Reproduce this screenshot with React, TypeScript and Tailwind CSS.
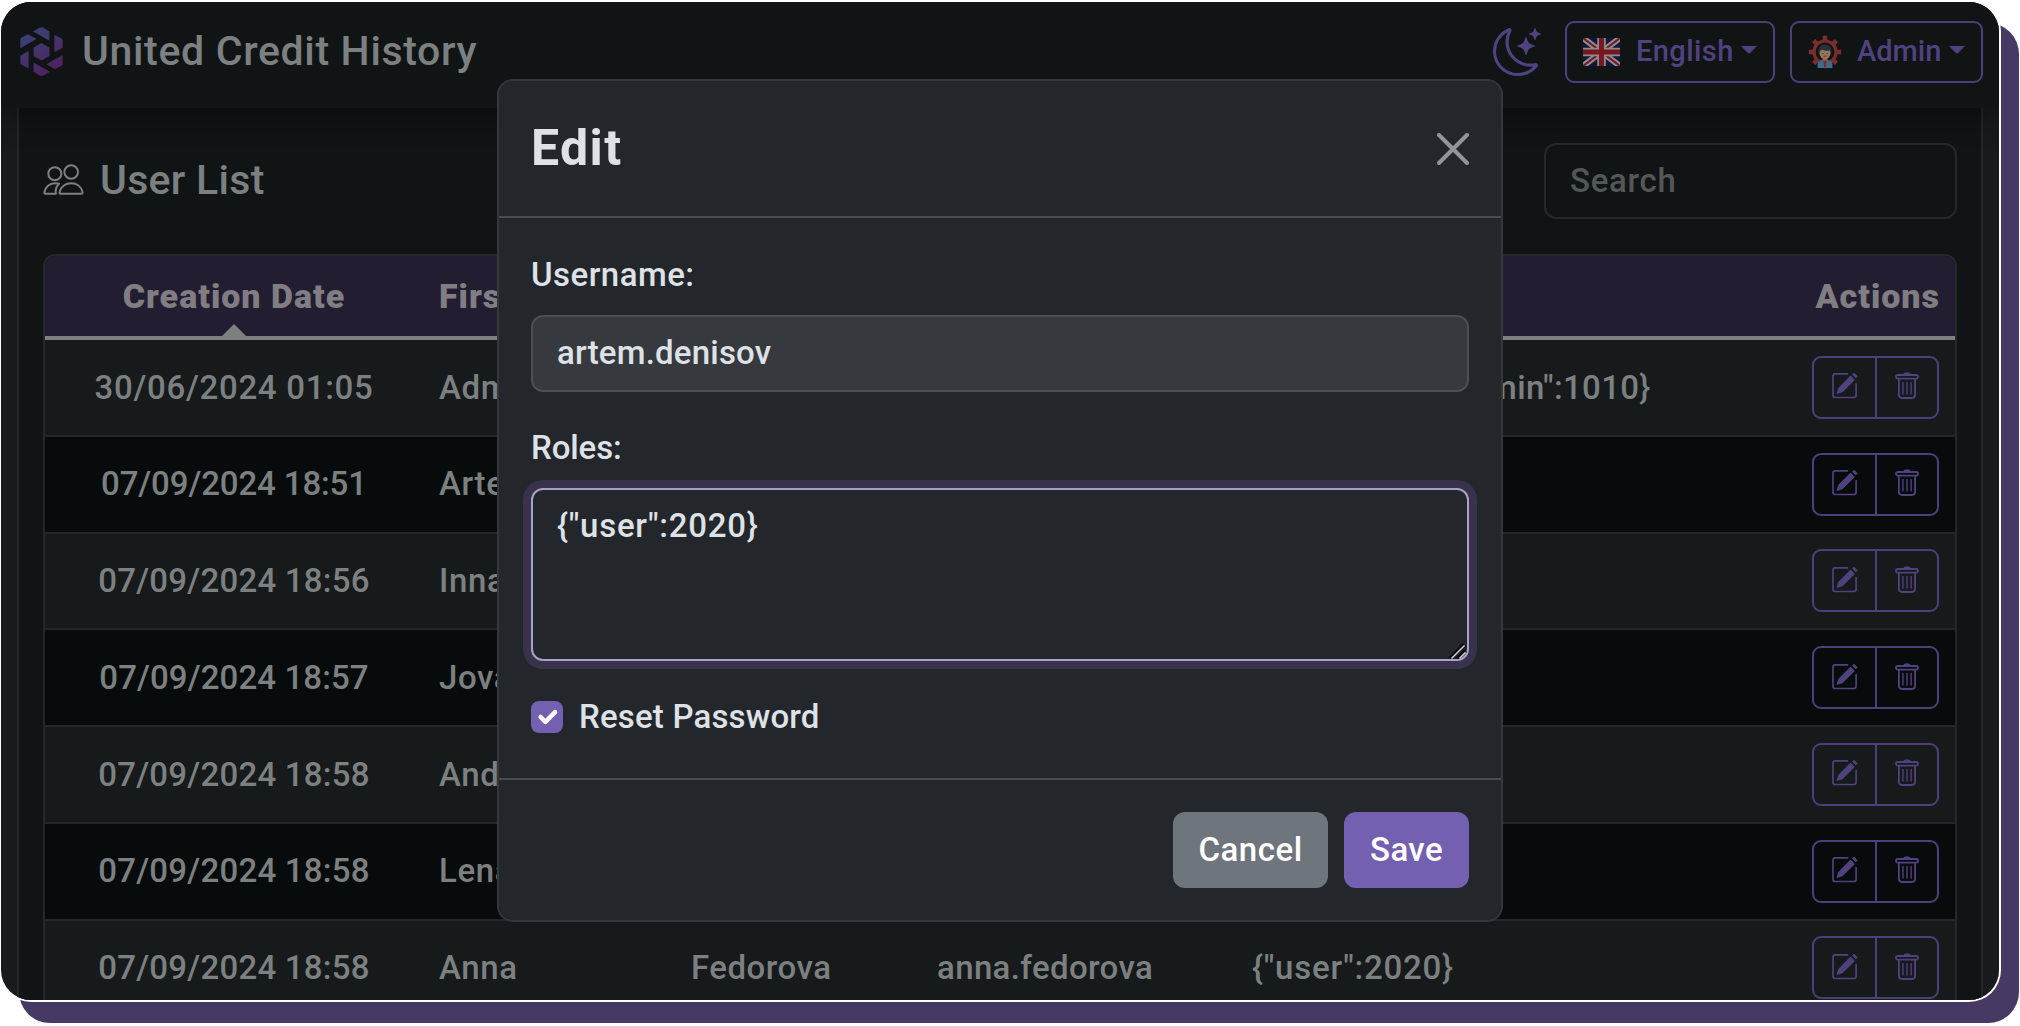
import React from "react";
import { BsMoonStars } from "react-icons/bs";

type User = {
  created: string;
  first: string;
  last: string;
  login: string;
  roles: string;
};

const users: User[] = [
  { created: "30/06/2024 01:05", first: "Admin", last: "Admin", login: "admin", roles: '{"user":2020,"admin":1010}' },
  { created: "07/09/2024 18:51", first: "Artem", last: "Denisov", login: "artem.denisov", roles: '{"user":2020}' },
  { created: "07/09/2024 18:56", first: "Inna", last: "Petrova", login: "inna.petrova", roles: '{"user":2020}' },
  { created: "07/09/2024 18:57", first: "Jovan", last: "Markovic", login: "jovan.markovic", roles: '{"user":2020}' },
  { created: "07/09/2024 18:58", first: "Andrey", last: "Ivanov", login: "andrey.ivanov", roles: '{"user":2020}' },
  { created: "07/09/2024 18:58", first: "Lena", last: "Smirnova", login: "lena.smirnova", roles: '{"user":2020}' },
  { created: "07/09/2024 18:58", first: "Anna", last: "Fedorova", login: "anna.fedorova", roles: '{"user":2020}' },
];

const dateTracking = [
  "tracking-[0.700px]",
  "tracking-[-0.120px]",
  "tracking-[0.230px]",
  "tracking-[0.100px]",
  "tracking-[0.230px]",
  "tracking-[0.230px]",
  "tracking-[0.230px]",
];

function Logo() {
  return (
    <svg viewBox="58 83 130 147" className="mb-px h-[49px] w-[43px]">
      <defs>
        <linearGradient id="logo" x1="0" y1="0" x2="0.6" y2="1">
          <stop offset="0" stopColor="#34457a" />
          <stop offset="0.5" stopColor="#43356b" />
          <stop offset="1" stopColor="#51225f" />
        </linearGradient>
      </defs>
      <path
        fill="url(#logo)"
        d="M98 96 117 85Q123 82 129 85L147 96V124ZM59 119Q59 117 62 115L82 104 108 119 59 147ZM59 169 84 155V208L62 196Q59 194 59 191ZM148 218 129 229Q123 232 117 229L99 218V190ZM187 195Q187 197 184 199L164 210 138 195 187 167ZM187 145 162 159V106L184 118Q187 120 187 123ZM123 131 147 145V170L123 184 99 170V145Z"
      />
    </svg>
  );
}

function PeopleIcon() {
  return (
    <svg viewBox="128 490 122 93" className="mb-1 h-[31px] w-[41px]" fill="none" stroke="#7c8081" strokeWidth="6" strokeLinecap="round" strokeLinejoin="round">
      <circle cx="163" cy="519" r="19.500" />
      <circle cx="212" cy="514" r="20.500" />
      <path d="M179 579H244Q247 579 246 574C242 557 228 548 212 548C196 548 181 557 177.500 574Q176 579 179 579Z" />
      <path d="M166 579H134Q131 579 131.500 575C134 559 148 548 163 548C168 548 172 548 176 549Q163 560 166 579Z" />
    </svg>
  );
}

function FlagIcon() {
  return (
    <svg viewBox="0 0 37 28" className="h-7 w-[37px]">
      <rect width="37" height="28" fill="#11173f" />
      <path d="M0 0 37 28M37 0 0 28" stroke="#8d8d8f" strokeWidth="6" />
      <path d="M0 0 37 28M37 0 0 28" stroke="#7a1522" strokeWidth="2" />
      <path d="M18.500 0V28M0 14H37" stroke="#8d8d8f" strokeWidth="8.500" />
      <path d="M18.500 0V28M0 14H37" stroke="#7a1522" strokeWidth="5" />
    </svg>
  );
}

function AdminIcon() {
  return (
    <svg viewBox="0 0 34 34" className="h-[34px] w-[34px]">
      <circle cx="17" cy="17" r="11" fill="none" stroke="#7d2c2e" strokeWidth="3.200" />
      <g stroke="#7d2c2e" strokeWidth="4.600">
        <path d="M17 5V.8M5 17H.8M29 17H33.200M8.500 8.500 5.600 5.600M25.500 8.500 28.400 5.600M8.500 25.500 5.600 28.400M25.500 25.500 28.400 28.400" />
      </g>
      <path d="M9.600 33V29Q9.600 25 17 24.500Q24.400 25 24.400 29V33Z" fill="#3f6b8c" />
      <path d="M15.300 25H18.700L18 32H16Z" fill="#7d2c2e" />
      <path d="M14.500 21H19.500V25.500H14.500Z" fill="#8a6a50" />
      <ellipse cx="17" cy="18" rx="5.600" ry="6" fill="#94755b" />
      <path d="M10.500 19Q9.500 9.500 17 9.500Q24.500 9.500 23.500 19L22 15.500Q17 16.500 14.500 14.500L12 16Z" fill="#25323b" />
      <path d="M14.600 18.500H15.600M18.600 18.500H19.600" stroke="#25323b" strokeWidth="1" />
      <path d="M15.500 21.200H18.500" stroke="#7d2c2e" strokeWidth="1" />
    </svg>
  );
}

function EditIcon() {
  return (
    <svg viewBox="0 0 26 27" className="h-[27px] w-[26px]" fill="none" stroke="currentColor">
      <path d="M15.500 1.900H3.300Q1 1.900 1 4.200V23.200Q1 25.500 3.300 25.500H21.800Q24.100 25.500 24.100 23.200V11.500" strokeWidth="1.700" strokeLinecap="round" />
      <path d="M5.300 21.200 7 16.300 18.600 4.600 21.900 7.900 10.200 19.500Z" fill="currentColor" strokeWidth="1.400" strokeLinejoin="round" />
      <path d="M20.600 2.600 22 1.200 25.200 4.400 23.800 5.800Z" fill="currentColor" strokeWidth="1" strokeLinejoin="round" />
    </svg>
  );
}

function TrashIcon() {
  return (
    <svg viewBox="0 0 24 27" className="h-[27px] w-6" fill="none" stroke="currentColor" strokeWidth="1.800" strokeLinecap="round">
      <path d="M8.600 2.800Q8.600 .8 10.400 .8H13.600Q15.400 .8 15.400 2.800Z" fill="currentColor" strokeWidth="0.600" />
      <rect x="1" y="3" width="22" height="3.700" rx="1.700" />
      <path d="M3.900 7V22.800Q3.900 26 7 26H17Q20.100 26 20.100 22.800V7" />
      <path d="M7.900 10.500V22M12 10.500V22M16.100 10.500V22" strokeWidth="1.400" />
    </svg>
  );
}

function Caret() {
  return <span className="mb-1 h-0 w-0 border-x-[8px] border-t-[8px] border-x-transparent border-t-[#4f427f]" />;
}

function Navbar() {
  return (
    <header className="relative z-10 flex h-[106px] shrink-0 items-start bg-[#101415] pl-[19px] pr-4 pt-[19px] shadow-[0_10px_24px_rgba(0,0,0,0.35)]">
      <div className="flex h-[62px] items-center">
        <Logo />
        <span className="ml-[19px] text-[41px] tracking-[0.670px] text-[#7c8081]">United Credit History</span>
      </div>
      <div className="ml-auto flex h-[62px] items-center text-[29px] text-[#4f427f]">
        <BsMoonStars size={48} />
        <button className="ml-[24px] flex h-[62px] w-[210px] items-center rounded-[9px] border-2 border-[#4b4079] pl-4">
          <FlagIcon />
          <span className="ml-[16px] mr-[7px] tracking-[0.420px]">English</span>
          <Caret />
        </button>
        <button className="ml-[15px] flex h-[62px] w-[193px] items-center rounded-[9px] border-2 border-[#4b4079] pl-4">
          <AdminIcon />
          <span className="ml-[15px] mr-[8px]">Admin</span>
          <Caret />
        </button>
      </div>
    </header>
  );
}

function RowActions() {
  return (
    <div className="flex h-[63px] w-[127px] rounded-[9px] border-2 border-[#4b4079] text-[#4f427f]">
      <button className="flex w-[63px] items-center justify-center border-r-2 border-[#4b4079] pb-[3px] pl-px">
        <EditIcon />
      </button>
      <button className="flex flex-1 items-center justify-center pb-[3px]">
        <TrashIcon />
      </button>
    </div>
  );
}

const columns = "grid grid-cols-[378px_252px_246px_315px_1fr_160px] items-center";

function UserTable() {
  return (
    <div className="flex-1 overflow-hidden rounded-t-[12px] border-2 border-b-0 border-[#24282a]">
      <div className={columns + " h-[84px] border-b-4 border-[#7e8080] bg-[#221d31] pb-px text-[34px] leading-[48px] font-black tracking-[1px] text-[#807e82]"}>
        <div className="relative flex h-full items-center justify-center">
          Creation Date
          <span className="absolute -bottom-px h-0 w-0 border-x-[12px] border-b-[12px] border-x-transparent border-b-[#7e8080]" />
        </div>
        <div className="px-4">First</div>
        <div className="px-4">Last</div>
        <div className="px-4">Username</div>
        <div className="px-4">Roles</div>
        <div className="pr-[15px] text-right">Actions</div>
      </div>
      {users.map((user, i) => (
        <div
          key={i}
          className={
            columns +
            " h-[96.750px] border-b-2 border-[#22272a] text-[#7c8081] " +
            (i % 2 ? "bg-[#080b0c]" : "bg-[#161a1b]")
          }
        >
          <div className={"text-center " + dateTracking[i]}>{user.created}</div>
          <div className="px-4 tracking-[0.600px]">{user.first}</div>
          <div className="px-4 tracking-[0.500px]">{user.last}</div>
          <div className="px-4 tracking-[0.360px]">{user.login}</div>
          <div className={"whitespace-nowrap px-4 " + (i === 0 ? "tracking-[0.330px]" : "tracking-[0.780px]")}>{user.roles}</div>
          <div className="flex justify-end pr-[16.500px]">
            <RowActions />
          </div>
        </div>
      ))}
    </div>
  );
}

function ResizeGrip() {
  return (
    <svg viewBox="0 0 18 16" className="absolute bottom-0 right-0 h-4 w-[18px]" fill="none" strokeLinecap="square">
      <path d="M2.500 14.500 14 3M9.500 14.500 15 9" stroke="#08090a" strokeWidth="4" />
      <path d="M3 15 15 3M11 15 16 10" stroke="#c9cbcd" strokeWidth="1.600" />
    </svg>
  );
}

function EditDialog() {
  return (
    <div className="absolute inset-0 z-20 flex items-start justify-center pt-[77px]">
      <section className="w-[1006px] rounded-[16px] border-2 border-[#34383b] bg-[#23262b] bg-clip-padding text-[#dee2e6]">
        <div className="flex h-[137px] items-center justify-between border-b-2 border-[#484d51] px-8">
          <h2 className="text-[50px] font-bold tracking-[1.400px]">Edit</h2>
          <svg viewBox="0 0 32 32" className="h-8 w-8" stroke="#929497" strokeWidth="4" strokeLinecap="round">
            <path d="M2 2 30 30M30 2 2 30" />
          </svg>
        </div>
        <div className="flex h-[562px] flex-col border-b-2 border-[#484d51] px-8 pt-8">
          <label className="h-12 leading-[49px] tracking-[0.480px]">Username:</label>
          <div className="mt-[17px] flex h-[77px] items-center rounded-[12px] border-2 border-[#4a4f53] bg-[#363a3e] px-6 pb-px tracking-[0.200px]">
            artem.denisov
          </div>
          <label className="mt-8 h-12 leading-[48px] tracking-[-0.100px]">Roles:</label>
          <div className="relative mt-4 h-[173px] rounded-[12px] border-2 border-[#a9a0cc] px-6 pt-[11px] leading-[49px] tracking-[0.750px] shadow-[0_0_0_8px_#38334a]">
            {'{"user":2020}'}
            <ResizeGrip />
          </div>
          <div className="mt-8 flex h-12 items-center">
            <span className="flex h-8 w-8 items-center justify-center rounded-[8px] bg-[#7460b0]">
              <svg viewBox="0 0 20 20" className="h-8 w-8" fill="none" stroke="#fff" strokeWidth="2.800" strokeLinecap="round" strokeLinejoin="round">
                <path d="m6 10 3 3 6-6" />
              </svg>
            </span>
            <span className="ml-4 tracking-[0.180px]">Reset Password</span>
          </div>
        </div>
        <div className="flex justify-end gap-4 p-8 text-white">
          <button className="h-[76px] w-[155px] rounded-[12px] bg-[#6f757c] tracking-[0.530px]">Cancel</button>
          <button className="h-[76px] w-[125px] rounded-[12px] bg-[#7460b0] tracking-[0.400px]">Save</button>
        </div>
      </section>
    </div>
  );
}

export default function App() {
  return (
    <div className="h-[1026px] w-[2020px] overflow-hidden bg-white pl-px pt-[2px] font-['Roboto',sans-serif] text-[33px] [font-weight:470]">
      <div className="h-[998px] w-[1998px] rounded-[30px] shadow-[0_0_0_2px_#fff,19px_22px_0_1px_#463963]">
        <div className="relative flex h-full flex-col overflow-hidden rounded-[30px] bg-[#171b1c]">
          <Navbar />
          <main className="mx-[16px] flex min-h-0 flex-1 flex-col border-x-2 border-[#232728] bg-[#101415] px-[24px] pt-[35px]">
            <div className="mb-[35px] flex h-[76px] items-center">
              <PeopleIcon />
              <h1 className="ml-[16px] text-[41px] tracking-[0.300px] text-[#7c8081]">User List</h1>
              <div className="ml-auto flex h-[76px] w-[413px] items-center rounded-[12px] border-2 border-[#24292a] px-6 tracking-[0.700px] text-[#535758]">
                Search
              </div>
            </div>
            <UserTable />
          </main>
          <EditDialog />
        </div>
      </div>
    </div>
  );
}
